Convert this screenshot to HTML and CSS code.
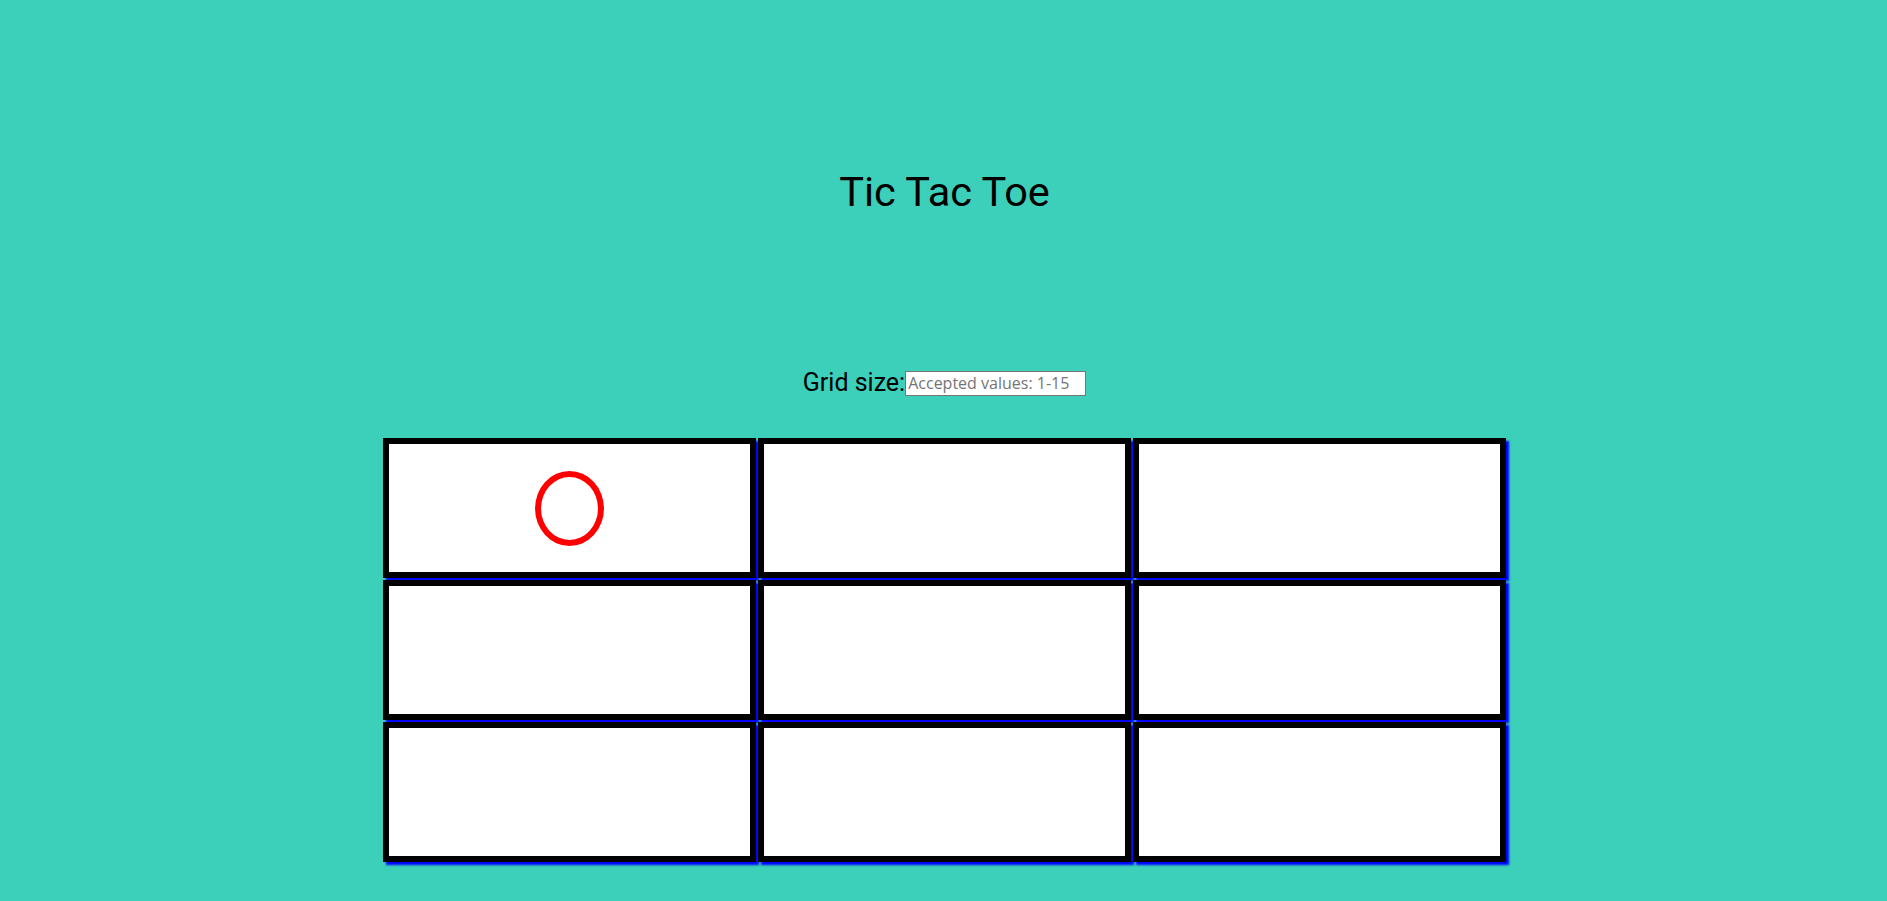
FILE: index.html
```html
<!DOCTYPE html>
<html lang="en">
<head>
<meta charset="utf-8">
<title>Tic Tac Toe</title>
<link rel="stylesheet" href="styles.css">
</head>
<body>
<main class="page">
  <h1 class="title">Tic Tac Toe</h1>
  <div class="controls">
    <label class="size-label" for="size">Grid size:</label><input class="size-input" id="size" type="text" placeholder="Accepted values: 1-15">
  </div>
  <div class="board">
    <div class="cell"><span class="mark-o"></span></div>
    <div class="cell"></div>
    <div class="cell"></div>
    <div class="cell"></div>
    <div class="cell"></div>
    <div class="cell"></div>
    <div class="cell"></div>
    <div class="cell"></div>
    <div class="cell"></div>
  </div>
</main>
</body>
</html>
```
FILE: styles.css
```css
html, body {
  margin: 0;
  padding: 0;
}

body {
  background: #3ccfba;
  font-family: Roboto, "Liberation Sans", sans-serif;
  color: #000;
  height: 901px;
  overflow: hidden;
}

.page {
  padding-left: 2px;
  padding-top: 168px;
}

.title {
  margin: 0;
  font-size: 41.5px;
  font-weight: 400;
  line-height: 47px;
  text-align: center;
}

.controls {
  margin-top: 154px;
  display: flex;
  justify-content: center;
  align-items: center;
  font-size: 25px;
  line-height: 28px;
  height: 28px;
}

.size-input {
  box-sizing: border-box;
  width: 181px;
  height: 25px;
  margin: 0;
  padding: 1px 2px;
  border: 1px solid #767676;
  background: #fff;
  font-family: "Open Sans", "DejaVu Sans", sans-serif;
  font-size: 16px;
  color: #000;
}

.size-input::placeholder {
  color: #757575;
  opacity: 1;
}

.board {
  margin-top: 41px;
  display: grid;
  grid-template-columns: repeat(3, 373px);
  grid-template-rows: repeat(3, 140px);
  gap: 2px;
  justify-content: center;
}

.cell {
  box-sizing: border-box;
  background: #fff;
  border: 6px solid #000;
  box-shadow: 3px 3px 2px #0000ff;
  display: flex;
  align-items: center;
  justify-content: center;
}

.mark-o {
  box-sizing: border-box;
  width: 69px;
  height: 75px;
  border: 6px solid #ff0000;
  border-radius: 50%;
}
```
